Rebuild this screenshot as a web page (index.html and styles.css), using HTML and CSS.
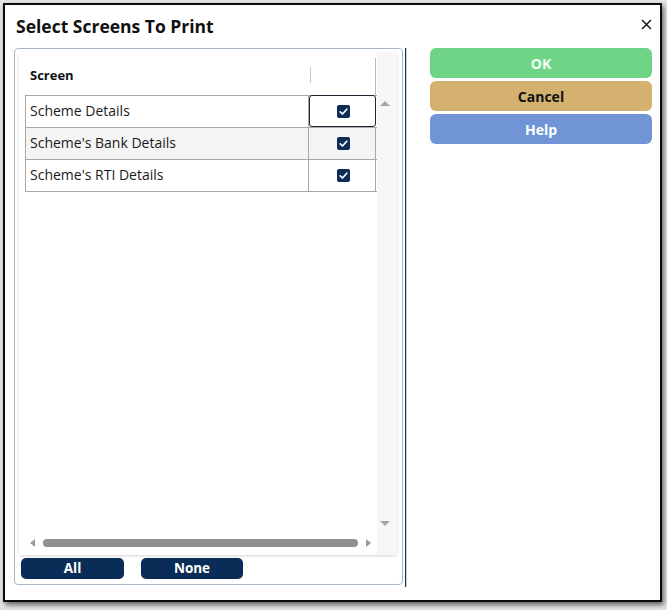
FILE: index.html
```html
<!DOCTYPE html>
<html>
<head>
<meta charset="utf-8">
<link rel="stylesheet" href="styles.css">
</head>
<body>
<div class="page">
  <div class="dialog">
    <div class="dlg-head">
      <div class="title">Select Screens To Print</div>
      <div class="close" aria-label="Close"><svg viewBox="0 0 11 11" width="11" height="11"><path d="M1 1 L10 10 M10 1 L1 10" stroke="#1a1a1a" stroke-width="1.5" fill="none"/></svg></div>
    </div>
    <div class="dlg-main">
      <div class="panel">
        <div class="card">
          <div class="grid-body">
            <div class="grid-header">
              <div class="hcell hcell-name">Screen</div>
              <div class="hcell hcell-check"><span class="hdiv"></span></div>
            </div>
            <div class="table">
              <div class="row">
                <div class="cell name">Scheme Details</div>
                <div class="cell check focus"><span class="cb"><svg viewBox="0 0 13 13" width="13" height="13"><path d="M3.2 6.8 L5.5 9 L9.8 4.2" fill="none" stroke="#fff" stroke-width="1.7" stroke-linecap="round" stroke-linejoin="round"/></svg></span></div>
              </div>
              <div class="row alt">
                <div class="cell name">Scheme's Bank Details</div>
                <div class="cell check"><span class="cb"><svg viewBox="0 0 13 13" width="13" height="13"><path d="M3.2 6.8 L5.5 9 L9.8 4.2" fill="none" stroke="#fff" stroke-width="1.7" stroke-linecap="round" stroke-linejoin="round"/></svg></span></div>
              </div>
              <div class="row">
                <div class="cell name">Scheme's RTI Details</div>
                <div class="cell check"><span class="cb"><svg viewBox="0 0 13 13" width="13" height="13"><path d="M3.2 6.8 L5.5 9 L9.8 4.2" fill="none" stroke="#fff" stroke-width="1.7" stroke-linecap="round" stroke-linejoin="round"/></svg></span></div>
              </div>
            </div>
          </div>
          <div class="vscroll">
            <span class="arrow-up"></span>
            <span class="arrow-down"></span>
          </div>
          <div class="hscroll">
            <span class="arrow-left"></span>
            <span class="thumb"></span>
            <span class="arrow-right"></span>
          </div>
          <div class="corner"></div>
        </div>
        <div class="sel-buttons">
          <button class="sel-btn">All</button>
          <button class="sel-btn">None</button>
        </div>
      </div>
      <div class="vsep"></div>
      <div class="actions">
        <button class="act ok">OK</button>
        <button class="act cancel">Cancel</button>
        <button class="act help">Help</button>
      </div>
    </div>
  </div>
</div>
</body>
</html>
```

FILE: styles.css
```css
* { box-sizing: border-box; }
html, body { margin: 0; padding: 0; }
body {
  background: #e4e4e4;
  font-family: "Open Sans", "Noto Sans", "DejaVu Sans", sans-serif;
  width: 667px;
  height: 610px;
  overflow: hidden;
}
.page {
  padding: 3px 0 0 3px;
}
.dialog {
  width: 659px;
  height: 599px;
  background: #fff;
  border: 2px solid #0b0b0b;
  box-shadow: 2px 3px 5px rgba(0,0,0,0.55);
  display: flex;
  flex-direction: column;
}
.dlg-head {
  height: 43px;
  display: flex;
  justify-content: space-between;
  align-items: flex-start;
  padding: 9px 8px 0 11px;
}
.title {
  font-size: 17.5px;
  font-weight: 700;
  color: #111;
  line-height: 24px;
}
.close {
  width: 11px;
  height: 11px;
  margin-top: 5px;
}
.close svg { display: block; }
.dlg-main {
  display: flex;
  padding-left: 9px;
  height: 539px;
}
.panel {
  width: 389px;
  height: 537px;
  border: 1px solid #a9b7c6;
  border-radius: 4px;
  padding: 3px 5px 0 4px;
  display: flex;
  flex-direction: column;
}
.card {
  height: 503px;
  background: #fff;
  box-shadow: 0 1px 3px rgba(0,0,0,0.18);
  border-radius: 3px;
  display: grid;
  grid-template-columns: 358px 20px;
  grid-template-rows: 481px 22px;
}
.grid-body {
  padding: 6px 0 0 6px;
  background: #fff;
}
.grid-header {
  display: flex;
  height: 37px;
}
.hcell {
  font-size: 13px;
  font-weight: 700;
  color: #111;
}
.hcell-name {
  width: 284px;
  padding: 9px 0 0 5px;
  line-height: 16px;
}
.hcell-check {
  width: 67px;
  border-right: 1px solid #b8b8b8;
  position: relative;
}
.hdiv {
  position: absolute;
  left: 1px;
  top: 9px;
  width: 1px;
  height: 16px;
  background: #c8c8c8;
}
.table {
  width: 352px;
  border-top: 1px solid #a8a8a8;
  border-left: 1px solid #a8a8a8;
}
.row {
  display: flex;
  height: 32px;
  border-bottom: 1px solid #a8a8a8;
  background: #fff;
}
.row.alt { background: #f4f4f4; }
.cell {
  height: 31px;
}
.cell.name {
  width: 283px;
  border-right: 1px solid #a8a8a8;
  font-size: 14px;
  color: #1a1a1a;
  line-height: 30px;
  padding-left: 4px;
}
.cell.check {
  width: 67px;
  border-right: 1px solid #a8a8a8;
  display: flex;
  align-items: center;
  justify-content: center;
  padding-left: 2px;
}
.cell.check.focus {
  border: 1px solid #1c2735;
  border-radius: 3px;
  height: 32px;
  margin: -1px 0 0 0;
  width: 67px;
}
.cb {
  width: 13px;
  height: 13px;
  background: #0c2d55;
  border-radius: 2px;
  display: block;
}
.cb svg { display: block; }
.vscroll {
  background: #f7f7f7;
  position: relative;
}
.arrow-up, .arrow-down {
  position: absolute;
  left: 3px;
  width: 0; height: 0;
  border-left: 5px solid transparent;
  border-right: 5px solid transparent;
}
.arrow-up { top: 49px; border-bottom: 5px solid #a6a6a6; }
.arrow-down { top: 469px; border-top: 5px solid #a6a6a6; }
.hscroll {
  background: #fff;
  display: flex;
  align-items: center;
  padding: 0 0 2px 11px;
}
.arrow-left, .arrow-right {
  width: 0; height: 0;
  border-top: 4.5px solid transparent;
  border-bottom: 4.5px solid transparent;
}
.arrow-left { border-right: 5px solid #9a9a9a; }
.arrow-right { border-left: 5px solid #9a9a9a; margin-left: 8px; }
.thumb {
  width: 315px;
  height: 8px;
  background: #909090;
  border-radius: 4px;
  margin-left: 8px;
}
.corner { background: #f7f7f7; }
.sel-buttons {
  display: flex;
  gap: 17px;
  padding: 3px 0 0 2px;
}
.sel-btn {
  height: 21px;
  width: 103px;
  border: none;
  border-radius: 5px;
  background: #0a2d57;
  color: #fff;
  font-family: "Open Sans", "Noto Sans", sans-serif;
  font-size: 13.5px;
  font-weight: 700;
  padding: 0;
  line-height: 21px;
}
.sel-btn + .sel-btn { width: 102px; }
.vsep {
  width: 2px;
  height: 539px;
  margin-left: 2px;
  background: #1d2f45;
  border-right: 1px solid #c9d3de;
}
.actions {
  margin-left: 23px;
  width: 222px;
  display: flex;
  flex-direction: column;
  gap: 3px;
}
.act {
  height: 30px;
  border: none;
  border-radius: 6px;
  font-family: "Open Sans", "Noto Sans", sans-serif;
  font-size: 14px;
  font-weight: 700;
  padding: 0;
}
.ok { background: #6fd485; color: #f4fff6; }
.cancel { background: #d5b16f; color: #111; }
.help { background: #7094d6; color: #fff; }
```
